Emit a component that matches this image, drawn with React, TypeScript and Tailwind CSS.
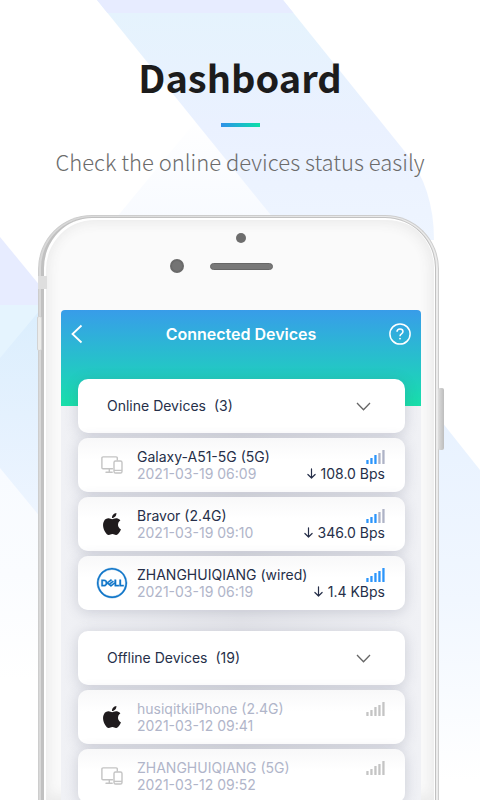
import React, { useId } from "react";
import { SiApple, SiDell } from "react-icons/si";

type Brand = "generic" | "apple" | "dell";

interface Device {
  name: string;
  seen: string;
  brand: Brand;
  level: number;
  rate?: string;
}

const online: Device[] = [
  { name: "Galaxy-A51-5G (5G)", seen: "2021-03-19 06:09", brand: "generic", level: 3, rate: "108.0 Bps" },
  { name: "Bravor (2.4G)", seen: "2021-03-19 09:10", brand: "apple", level: 3, rate: "346.0 Bps" },
  { name: "ZHANGHUIQIANG (wired)", seen: "2021-03-19 06:19", brand: "dell", level: 5, rate: "1.4 KBps" },
];

const offline: Device[] = [
  { name: "husiqitkiiPhone (2.4G)", seen: "2021-03-12 09:41", brand: "apple", level: 0 },
  { name: "ZHANGHUIQIANG (5G)", seen: "2021-03-12 09:52", brand: "generic", level: 0 },
];

function Backdrop() {
  return (
    <svg
      className="absolute inset-0 h-full w-full"
      viewBox="0 0 480 800"
      preserveAspectRatio="xMidYMin slice"
      aria-hidden="true"
    >
      <defs>
        <linearGradient id="band" gradientUnits="userSpaceOnUse" x1="0" y1="13" x2="0" y2="240">
          <stop offset="0" stopColor="#e5f3fd" />
          <stop offset="0.5" stopColor="#eaf1ff" />
          <stop offset="1" stopColor="#eef5ff" />
        </linearGradient>
        <linearGradient id="soft" gradientUnits="userSpaceOnUse" x1="0" y1="110" x2="0" y2="230">
          <stop offset="0" stopColor="#ffffff" />
          <stop offset="1" stopColor="#f7faff" />
        </linearGradient>
        <linearGradient id="left" gradientUnits="userSpaceOnUse" x1="0" y1="310" x2="0" y2="520">
          <stop offset="0" stopColor="#dbeefd" />
          <stop offset="0.5" stopColor="#e4f1fe" />
          <stop offset="1" stopColor="#eef5ff" />
        </linearGradient>
        <linearGradient id="leftTail" gradientUnits="userSpaceOnUse" x1="0" y1="468" x2="0" y2="680">
          <stop offset="0" stopColor="#f8fbff" />
          <stop offset="0.5" stopColor="#fafcff" />
          <stop offset="1" stopColor="#ffffff" />
        </linearGradient>
        <linearGradient id="right" gradientUnits="userSpaceOnUse" x1="0" y1="420" x2="0" y2="780">
          <stop offset="0" stopColor="#e8f2ff" />
          <stop offset="0.5" stopColor="#f1f7ff" />
          <stop offset="1" stopColor="#ffffff" />
        </linearGradient>
      </defs>
      <path d="M205 110L310 240H98Z" fill="url(#soft)" />
      <path d="M97 0H283L406 153Q434 188 434 240H291Z" fill="url(#band)" />
      <path d="M97 0H283L293.500 13H107.500Z" fill="#e7ecff" />
      <path d="M0 468H55V680H0Z" fill="url(#leftTail)" />
      <path d="M0 305H55V300L0 366Z" fill="#e5f4fe" />
      <path d="M0 358L55 292V535L0 468Z" fill="url(#left)" />
      <path d="M0 237L55 304V305H0Z" fill="#e7ecff" />
      <path d="M430 407L480 470V800H430Z" fill="url(#right)" />
    </svg>
  );
}

function DevicesIcon() {
  return (
    <svg width="22" height="18" viewBox="0 0 22 18" fill="none" stroke="#c4c4c4" strokeWidth="1.400" aria-hidden="true">
      <path d="M16.300 4V2Q16.300 .9 15.200 .9H2Q.9 .9 .9 2V11.700Q.9 12.800 2 12.800H11.500M8.300 12.800V16M5 16.200H11.200" strokeLinecap="round" />
      <rect x="13" y="5" width="8" height="12" rx="1.600" />
      <path d="M13 14.400H21" />
    </svg>
  );
}

function BrandIcon({ brand }: { brand: Brand }) {
  if (brand === "apple") return <SiApple size={22} color="#1f1b1d" aria-hidden="true" />;
  if (brand === "dell")
    return <SiDell size={30} color="#0f75c8" stroke="#0f75c8" strokeWidth="0.3" className="overflow-visible" aria-hidden="true" />;
  return <DevicesIcon />;
}

const barHeights = [4, 6, 9, 11, 14];

function Signal({ level, dim }: { level: number; dim: boolean }) {
  return (
    <svg width="19" height="14" viewBox="0 0 19 14" role="img" aria-label={`Signal ${level} of 5`}>
      {barHeights.map((h, i) => (
        <rect
          key={h}
          x={i * 4 + 0.3}
          y={14 - h}
          width="2.300"
          height={h}
          rx="0.500"
          fill={i < level ? "#2b95fb" : dim ? "#c4c4c4" : "#aeb3c6"}
        />
      ))}
    </svg>
  );
}

function DownArrow() {
  return (
    <svg width="9" height="11" viewBox="0 0 9 11" fill="none" stroke="#262f49" strokeWidth="1.200" strokeLinecap="round" strokeLinejoin="round" aria-hidden="true">
      <path d="M4.500 .8V10M.9 6.500L4.500 10L8.100 6.500" />
    </svg>
  );
}

function DeviceRow({ device, dim }: { device: Device; dim: boolean }) {
  return (
    <li className="flex h-[54px] items-center rounded-[10px] bg-linear-to-b from-[#f8f8f9] to-white to-40% pr-5 pl-[19px] text-sm leading-[17px] shadow-[0_2px_14px_rgba(70,75,105,0.20)]">
      <span className="flex w-[30px] shrink-0 justify-center">
        <BrandIcon brand={device.brand} />
      </span>
      <div className="ml-[10px] flex-1 whitespace-nowrap">
        <p className={dim ? "text-[#b0b5c9]" : "text-[#262f49]"}>{device.name}</p>
        <p className="text-[#b0b5c9]">{device.seen}</p>
      </div>
      <div className="flex flex-col items-end self-stretch pt-3">
        <Signal level={device.level} dim={dim} />
        {device.rate && (
          <p className="mt-px flex items-center gap-[5px] whitespace-nowrap text-[#262f49]">
            <DownArrow />
            {device.rate}
          </p>
        )}
      </div>
    </li>
  );
}

function DeviceGroup({ title, count, devices, dim }: { title: string; count: number; devices: Device[]; dim: boolean }) {
  const listId = useId();
  return (
    <section>
      <button
        type="button"
        aria-expanded="true"
        aria-controls={listId}
        className="flex h-[54px] w-full items-center rounded-[10px] bg-white pr-[34px] pl-[29px] text-sm text-[#262f49] shadow-[0_2px_14px_rgba(70,75,105,0.20)]"
      >
        <span>{title}</span>
        <span className="ml-2">({count})</span>
        <svg className="ml-auto" width="15" height="9" viewBox="0 0 15 9" fill="none" stroke="#666" strokeWidth="1.300" aria-hidden="true">
          <path d="M1 1L7.500 7.700L14 1" />
        </svg>
      </button>
      <ul id={listId} className="mt-[5px] flex flex-col gap-[5px]">
        {devices.map((d) => (
          <DeviceRow key={d.name} device={d} dim={dim} />
        ))}
      </ul>
    </section>
  );
}

function Screen() {
  return (
    <div className="flex-1 overflow-hidden rounded-t-[4px] bg-linear-to-r from-[#f0f1f5] via-[#e4e5ea] to-[#f0f1f5] font-[Inter,sans-serif]">
      <div className="bg-linear-to-b from-[#389ce9] to-[#18dfa9] bg-[length:100%_96px] bg-no-repeat pr-4 pl-[17px]">
        <header className="flex h-12 items-center justify-between text-white">
          <button type="button" aria-label="Back" className="-ml-[7px] flex w-7 justify-start">
            <svg width="12" height="20" viewBox="0 0 12 20" fill="none" stroke="currentColor" strokeWidth="1.800" aria-hidden="true">
              <path d="M10.500 1.500L1.500 10L10.500 18.500" />
            </svg>
          </button>
          <h2 className="text-base leading-5 font-semibold">Connected Devices</h2>
          <button type="button" aria-label="Help" className="-mr-[6px] flex w-7 justify-end">
            <svg width="22" height="22" viewBox="0 0 22 22" fill="none" stroke="currentColor" strokeWidth="1.500" aria-hidden="true">
              <circle cx="11" cy="11" r="10.100" />
              <path d="M8 8.800Q8.100 6 11 6T14 8.600Q14 9.900 12.500 10.800Q11 11.700 11 13.300" />
              <circle cx="11" cy="15.700" r="0.500" fill="currentColor" strokeWidth="1" />
            </svg>
          </button>
        </header>
        <div className="mt-[21px] flex flex-col gap-[21px]">
          <DeviceGroup title="Online Devices" count={3} devices={online} dim={false} />
          <DeviceGroup title="Offline Devices" count={19} devices={offline} dim />
        </div>
      </div>
    </div>
  );
}

function Phone() {
  return (
    <div className="relative mt-[37px] mr-[41px] ml-[38px] flex min-h-0 flex-1 flex-col">
      <span className="absolute top-[173px] -right-[5px] h-[62px] w-[6px] rounded-[2px] bg-linear-to-r from-[#dedede] to-[#bdbdbd]" />
      <div className="flex min-h-0 flex-1 flex-col rounded-t-[54px] border border-b-0 border-[#cdcdcd] bg-linear-to-r from-[#d8d8d8] to-[#ececec] pt-[1px] pr-[2px] pl-[2px]">
        <div className="flex min-h-0 flex-1 flex-col rounded-t-[51px] border-t border-r border-l-[3px] border-[#c1c1c1] bg-[#fafafa] pr-[14px] pl-[17px] shadow-[inset_2px_2px_0_#ffffff,inset_-1px_0_0_#ffffff,inset_0_0_12px_5px_#ebebeb]">
          <div className="flex h-[92px] shrink-0 flex-col pt-[15px]">
            <span className="mx-auto h-[10px] w-[10px] rounded-full bg-[#6d6d6d]" />
            <div className="mt-4 grid grid-cols-[1fr_auto_1fr] items-center">
              <span className="mr-[26px] h-[14px] w-[14px] justify-self-end rounded-full border-2 border-[#6a6a6a] bg-[#747474]" />
              <span className="h-[7px] w-[63px] rounded-full border border-[#676767] bg-[#787878]" />
            </div>
          </div>
          <Screen />
        </div>
      </div>
      <span className="absolute top-[61px] left-0 h-[13px] w-[9px] bg-[#dedede]" />
      <span className="absolute top-[101px] -left-[1px] h-[35px] w-[5px] rounded-[2px] border border-[#d3d3d3] bg-[#ececea]" />
    </div>
  );
}

export default function App() {
  return (
    <main className="relative h-screen overflow-hidden bg-white">
      <Backdrop />
      <div className="relative flex h-full flex-col">
        <div className="flex flex-col items-center pt-12 text-center font-['Noto_Sans_CJK_SC',sans-serif]">
          <h1 className="text-[38px] leading-[58px] font-bold text-[#1c1c1c]">Dashboard</h1>
          <span className="mt-[17px] h-1 w-[39px] bg-linear-to-r from-[#2f8fe8] to-[#0fdfa6]" />
          <p className="mt-[17px] text-[22px] leading-[34px] font-light text-[#6b6b6b]">
            Check the online devices status easily
          </p>
        </div>
        <Phone />
      </div>
    </main>
  );
}
